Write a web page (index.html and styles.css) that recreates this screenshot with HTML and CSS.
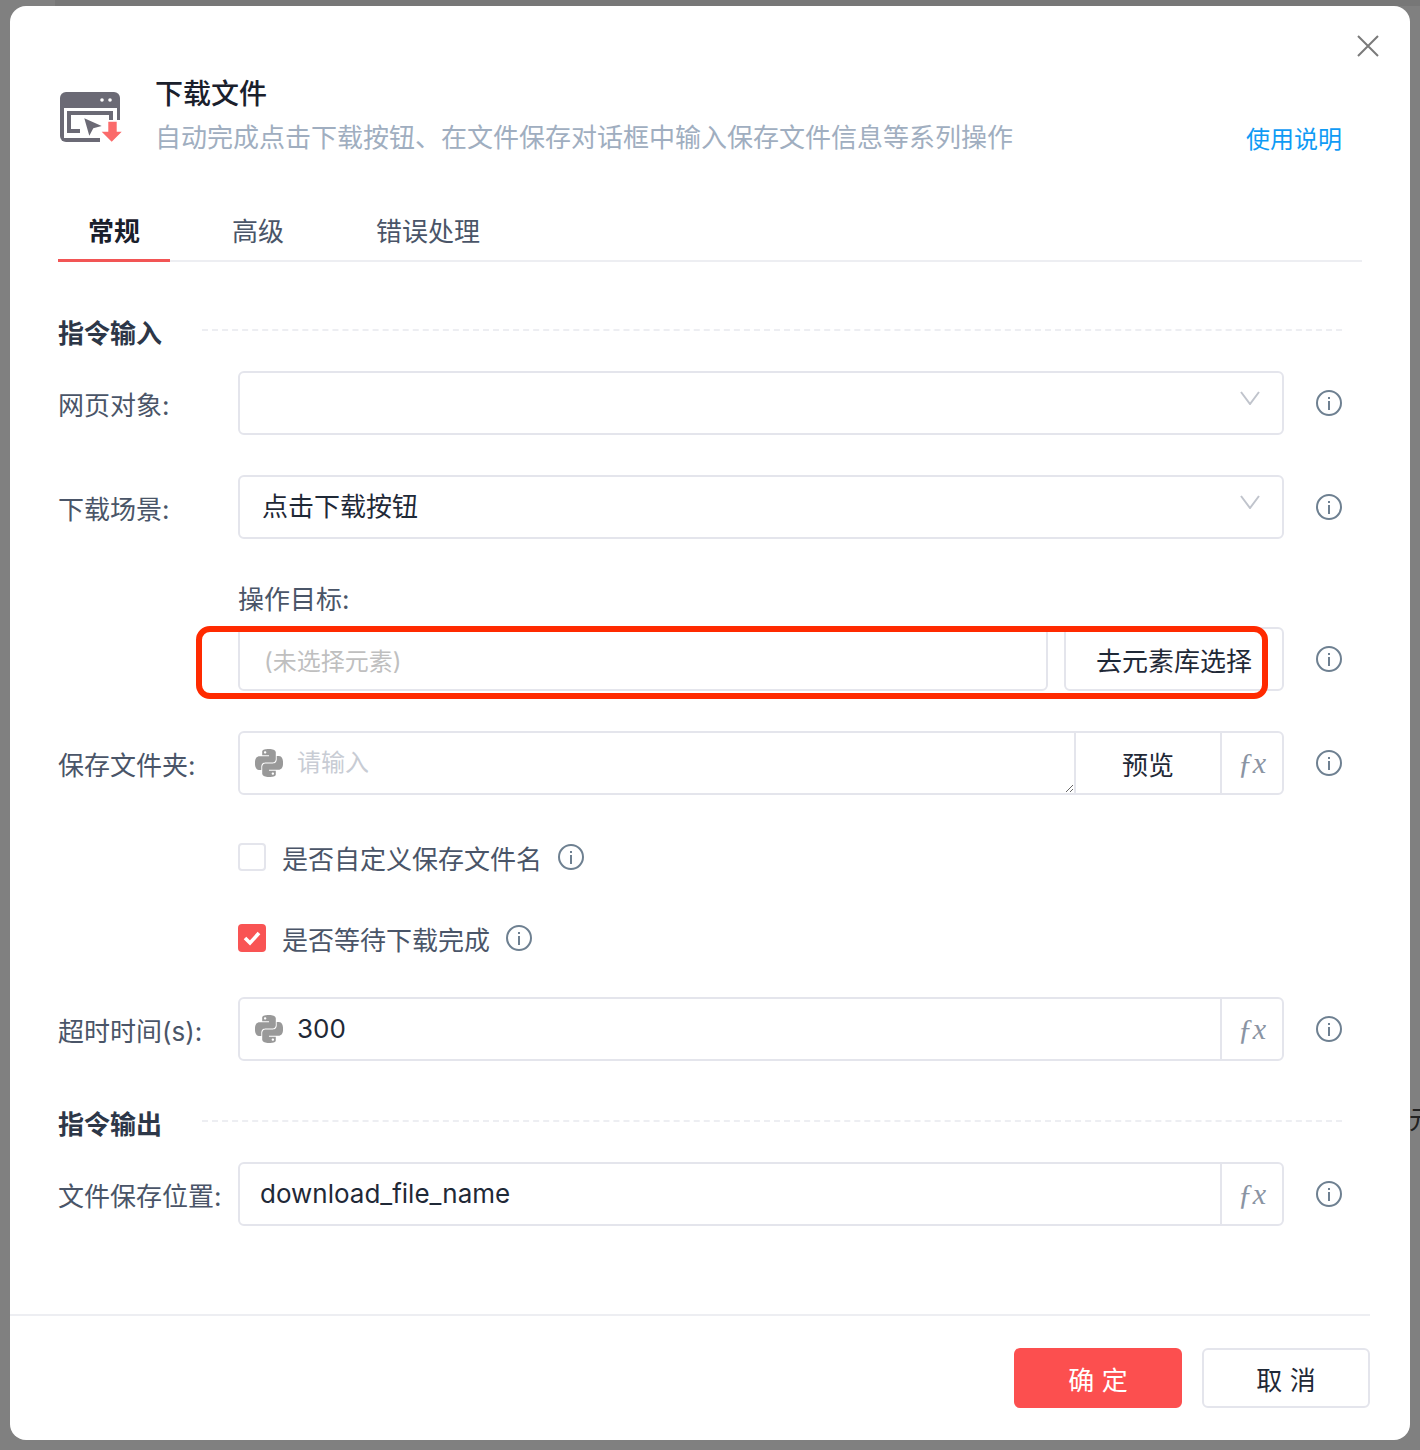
FILE: index.html
```html
<!DOCTYPE html>
<html lang="zh-CN">
<head>
  <meta charset="UTF-8">
  <title>下载文件</title>
  <link rel="stylesheet" href="styles.css">
</head>
<body>
  <svg width="0" height="0" class="defs">
    <symbol id="info" viewBox="0 0 26 26">
      <circle cx="13" cy="13" r="12" fill="none" stroke="currentColor" stroke-width="2"/>
      <rect x="12" y="11" width="2" height="9" fill="currentColor"/>
      <rect x="12" y="7" width="2" height="2" fill="currentColor"/>
    </symbol>
    <symbol id="chevron" viewBox="0 0 20 14">
      <path d="M1 1l9 12 9-12" fill="none" stroke="currentColor" stroke-width="2"/>
    </symbol>
    <symbol id="python" viewBox="0 0 24 24">
      <path fill="currentColor" d="M14.25.18l.9.2.73.26.59.3.45.32.34.34.25.34.16.33.1.3.04.26.02.2-.01.13V8.5l-.05.63-.13.55-.21.46-.26.38-.3.31-.33.25-.35.19-.35.14-.33.1-.3.07-.26.04-.21.02H8.77l-.69.05-.59.14-.5.22-.41.27-.33.32-.27.35-.2.36-.15.37-.1.35-.07.32-.04.27-.02.21v3.06H3.17l-.21-.03-.28-.07-.32-.12-.35-.18-.36-.26-.36-.36-.35-.46-.32-.59-.28-.73-.21-.88-.14-1.05-.05-1.23.06-1.22.16-1.04.24-.87.32-.71.36-.57.4-.44.42-.33.42-.24.4-.16.36-.1.32-.05.24-.01h.16l.06.01h8.16v-.83H6.18l-.01-2.75-.02-.37.05-.34.11-.31.17-.28.25-.26.31-.23.38-.2.44-.18.51-.15.58-.12.64-.1.71-.06.77-.04.84-.02 1.27.05zm-6.3 1.98l-.23.33-.08.41.08.41.23.34.33.22.41.09.41-.09.33-.22.23-.34.08-.41-.08-.41-.23-.33-.33-.22-.41-.09-.41.09zm13.09 3.95l.28.06.32.12.35.18.36.27.36.35.35.47.32.59.28.73.21.88.14 1.04.05 1.23-.06 1.23-.16 1.04-.24.86-.32.71-.36.57-.4.45-.42.33-.42.24-.4.16-.36.09-.32.05-.24.02-.16-.01h-8.22v.82h5.84l.01 2.76.02.36-.05.34-.11.31-.17.29-.25.25-.31.24-.38.2-.44.17-.51.15-.58.13-.64.09-.71.07-.77.04-.84.01-1.27-.04-1.07-.14-.9-.2-.73-.25-.59-.3-.45-.33-.34-.34-.25-.34-.16-.33-.1-.3-.04-.25-.02-.2.01-.13v-5.34l.05-.64.13-.54.21-.46.26-.38.3-.32.33-.24.35-.2.35-.14.33-.1.3-.06.26-.04.21-.02.13-.01h5.84l.69-.05.59-.14.5-.21.41-.28.33-.32.27-.35.2-.36.15-.36.1-.35.07-.32.04-.28.02-.21V6.07h2.09l.14.01zm-6.47 14.25l-.23.33-.08.41.08.41.23.33.33.23.41.08.41-.08.33-.23.23-.33.08-.41-.08-.41-.23-.33-.33-.23-.41-.08-.41.08z"/>
    </symbol>
  </svg>

  <!-- page behind the dialog, only its edges show -->
  <div class="backdrop-top"></div>
  <div class="backdrop-text">元</div>

  <div class="modal">
    <svg class="close" viewBox="0 0 22 22"><path d="M1 1l20 20M21 1L1 21" fill="none" stroke="currentColor" stroke-width="2"/></svg>

    <div class="header">
      <svg class="header-icon" viewBox="0 0 62 52">
        <rect width="60" height="50" rx="6" fill="#6b6a75"/>
        <circle cx="42" cy="8" r="1.8" fill="#fff"/>
        <circle cx="50" cy="8" r="1.8" fill="#fff"/>
        <rect x="4" y="16" width="53" height="30" fill="#fff"/>
        <path d="M51 28V21H9V39H20" fill="none" stroke="#6b6a75" stroke-width="4"/>
        <rect x="40" y="28" width="22" height="24" fill="#fff"/>
        <path d="M24.3 26.3L41.7 34 33.3 36.3 29.3 43.7z" fill="#6b6a75"/>
        <path d="M48.3 29.7h8.4v10h5L51.7 49.7l-10-10h6.600z" fill="#fb6b6b"/>
      </svg>
      <div class="header-text">
        <div class="title">下载文件</div>
        <div class="subtitle">自动完成点击下载按钮、在文件保存对话框中输入保存文件信息等系列操作</div>
      </div>
      <a class="help-link">使用说明</a>
    </div>

    <div class="tabs">
      <div class="tab active">常规</div>
      <div class="tab">高级</div>
      <div class="tab">错误处理</div>
    </div>

    <div class="section first">
      <span class="section-title">指令输入</span>
      <span class="section-line"></span>
    </div>

    <div class="row row-near">
      <label class="row-label">网页对象:</label>
      <div class="field select"><svg class="chevron"><use href="#chevron"/></svg></div>
      <svg class="info"><use href="#info"/></svg>
    </div>

    <div class="row">
      <label class="row-label">下载场景:</label>
      <div class="field select">
        <span class="value">点击下载按钮</span>
        <svg class="chevron"><use href="#chevron"/></svg>
      </div>
      <svg class="info"><use href="#info"/></svg>
    </div>

    <div class="sub-label">操作目标:</div>
    <div class="row row-target">
      <div class="row-label"></div>
      <div class="target">
        <div class="field target-input"><span class="target-placeholder">(未选择元素)</span></div>
        <div class="field target-btn">去元素库选择</div>
        <div class="highlight"></div>
      </div>
      <svg class="info"><use href="#info"/></svg>
    </div>

    <div class="row">
      <label class="row-label">保存文件夹:</label>
      <div class="field">
        <svg class="python"><use href="#python"/></svg>
        <textarea class="area" placeholder="请输入"></textarea>
        <div class="addon preview">预览</div>
        <div class="addon fx">ƒx</div>
      </div>
      <svg class="info"><use href="#info"/></svg>
    </div>

    <div class="check-row check-first">
      <span class="checkbox"></span>
      <span class="check-text">是否自定义保存文件名</span>
      <svg class="info info-inline"><use href="#info"/></svg>
    </div>

    <div class="check-row check-second">
      <span class="checkbox checked">
        <svg viewBox="0 0 28 28"><path d="M7 14l5 5 9-10" fill="none" stroke="#fff" stroke-width="3.600"/></svg>
      </span>
      <span class="check-text">是否等待下载完成</span>
      <svg class="info info-inline"><use href="#info"/></svg>
    </div>

    <div class="row row-timeout">
      <label class="row-label">超时时间(s):</label>
      <div class="field">
        <svg class="python"><use href="#python"/></svg>
        <span class="value value-py">300</span>
        <div class="addon fx">ƒx</div>
      </div>
      <svg class="info"><use href="#info"/></svg>
    </div>

    <div class="section second">
      <span class="section-title">指令输出</span>
      <span class="section-line"></span>
    </div>

    <div class="row row-near">
      <label class="row-label">文件保存位置:</label>
      <div class="field">
        <span class="value value-out">download_file_name</span>
        <div class="addon fx">ƒx</div>
      </div>
      <svg class="info"><use href="#info"/></svg>
    </div>

    <div class="footer">
      <button class="btn primary">确 定</button>
      <button class="btn">取 消</button>
    </div>
  </div>
</body>
</html>
```

FILE: styles.css
```css
* {
  box-sizing: border-box;
}
html, body {
  height: 100%;
}
body {
  margin: 0;
  height: 1450px;
  overflow: hidden;
  position: relative;
  background-color: #808080;
  font-family: Inter, "Noto Sans CJK SC", sans-serif;
  font-size: 26px;
  color: #1f2937;
}
.defs {
  position: absolute;
}
.backdrop-top {
  position: absolute;
  left: 55px;
  top: 0;
  right: 0;
  height: 6px;
  background-color: #777;
}
.backdrop-text {
  position: absolute;
  left: 1409px;
  top: 1102px;
  font-size: 26px;
  line-height: 36px;
  color: #222;
}
.modal {
  position: relative;
  display: flex;
  flex-direction: column;
  margin: 6px 10px 0;
  height: 1434px;
  padding: 70px 68px 0 48px;
  background-color: #fff;
  border-radius: 16px;
}
.close {
  position: absolute;
  left: 1347px;
  top: 29px;
  width: 22px;
  height: 22px;
  color: #7a7a7a;
}
.header {
  display: flex;
  height: 80px;
}
.header-icon {
  width: 62px;
  height: 52px;
  margin: 16px 33px 0 2px;
  flex-shrink: 0;
}
.header-text {
  flex: 1;
}
.title {
  font-size: 28px;
  font-weight: 500;
  line-height: 36px;
  color: #1a202c;
}
.subtitle {
  margin-top: 8px;
  line-height: 36px;
  color: #a0aec0;
}
.help-link {
  align-self: flex-end;
  font-size: 24px;
  line-height: 36px;
  color: #0f9bf5;
  margin-bottom: -2px;
}
.tabs {
  display: flex;
  gap: 32px;
  height: 58px;
  margin: 48px -20px 0 0;
  border-bottom: 2px solid #edeef2;
}
.tab {
  padding: 0 30px;
  line-height: 56px;
  height: 58px;
  color: #4a5568;
}
.tab.active {
  font-weight: 700;
  color: #1a202c;
  border-bottom: 3px solid #f25555;
}
.section {
  display: flex;
  align-items: center;
  height: 36px;
}
.section.first {
  margin-top: 51px;
}
.section.second {
  margin-top: 43px;
}
.section-title {
  width: 144px;
  font-weight: 700;
  color: #2d3748;
}
.section-line {
  flex: 1;
  border-top: 2px dashed #edeef2;
  margin-top: -3px;
}
.row {
  display: flex;
  align-items: center;
  margin-top: 40px;
}
.row.row-near {
  margin-top: 22px;
}
.row.row-target {
  margin-top: 9px;
}
.row.row-timeout {
  margin-top: 41px;
}
.row-label {
  width: 180px;
  flex-shrink: 0;
  color: #4a5568;
}
.field {
  position: relative;
  display: flex;
  align-items: center;
  flex: 1;
  height: 64px;
  border: 2px solid #e4e5ec;
  border-radius: 6px;
  background-color: #fff;
}
.select {
  padding: 0 22px;
}
.chevron {
  position: absolute;
  right: 22px;
  top: 18px;
  width: 20px;
  height: 14px;
  color: #c0c4cc;
}
.info {
  width: 26px;
  height: 26px;
  margin-left: 32px;
  flex-shrink: 0;
  color: #6e8091;
}
.info.info-inline {
  margin-left: 16px;
}
.value {
  color: #1f2937;
  line-height: 36px;
}
.value-py {
  margin-left: 57px;
  flex: 1;
}
.value-out {
  margin-left: 20px;
  flex: 1;
}
.sub-label {
  margin: 43px 0 0 180px;
  line-height: 36px;
  color: #4a5568;
}
.target {
  position: relative;
  display: flex;
  flex: 1;
  gap: 16px;
}
.target-input {
  flex: 1;
  padding-left: 24px;
}
.target-placeholder {
  font-size: 24px;
  color: #bfbfbf;
}
.target-btn {
  flex: none;
  width: 220px;
  justify-content: center;
}
.highlight {
  position: absolute;
  left: -42px;
  top: -1px;
  width: 1072px;
  height: 73px;
  border: 6px solid #ff2a00;
  border-radius: 14px;
}
.python {
  position: absolute;
  left: 15px;
  top: 16px;
  width: 28px;
  height: 28px;
  color: #999;
}
.area {
  flex: 1;
  height: 100%;
  padding: 12px 0 0 57px;
  border: none;
  outline: none;
  background: transparent;
  font-family: inherit;
  font-size: 24px;
  line-height: 36px;
  color: #1f2937;
}
.area::placeholder {
  color: #c8ccd4;
}
.addon {
  display: flex;
  align-items: center;
  justify-content: center;
  height: 100%;
  border-left: 2px solid #e4e5ec;
}
.preview {
  width: 146px;
}
.fx {
  width: 62px;
  font-family: "Liberation Serif", serif;
  font-style: italic;
  font-size: 30px;
  color: #8a94a3;
}
.check-row {
  display: flex;
  align-items: center;
  height: 36px;
  margin-left: 180px;
}
.check-first {
  margin-top: 44px;
}
.check-second {
  margin-top: 45px;
}
.checkbox {
  width: 28px;
  height: 28px;
  margin-right: 16px;
  border: 2px solid #e4e5ec;
  border-radius: 4px;
}
.checkbox.checked {
  border: none;
  background-color: #f95454;
}
.checkbox svg {
  display: block;
}
.check-text {
  color: #4a5568;
}
.footer {
  display: flex;
  justify-content: flex-end;
  gap: 20px;
  margin: auto -28px 0 -48px;
  padding: 32px 0 32px;
  border-top: 2px solid #edeef2;
}
.btn {
  width: 168px;
  height: 60px;
  border: 2px solid #e4e5ec;
  border-radius: 6px;
  background-color: #fff;
  font-family: inherit;
  font-size: 26px;
  color: #1f2937;
}
.btn.primary {
  border: none;
  background-color: #fc4f4f;
  color: #fff;
}
```
